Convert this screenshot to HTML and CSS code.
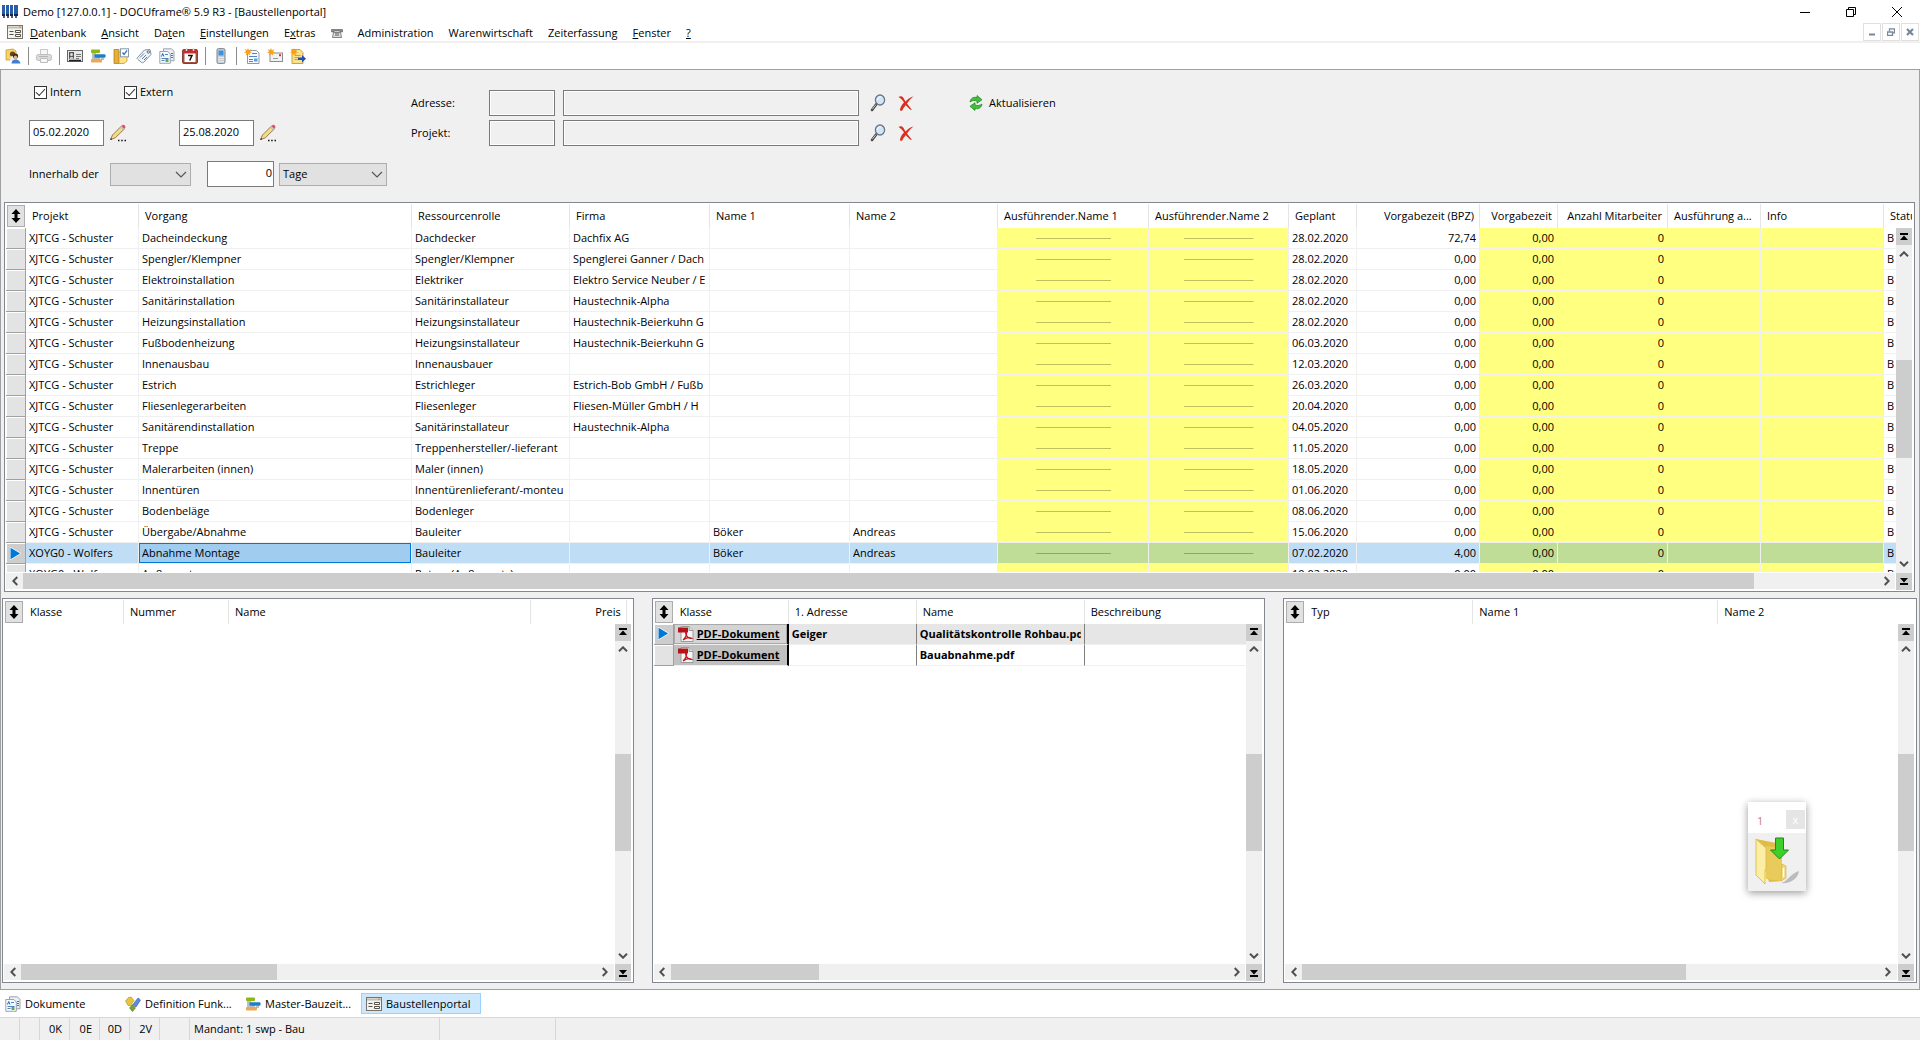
FILE: index.html
```html
<!DOCTYPE html>
<html lang="de">
<head>
<meta charset="utf-8">
<title>Demo [127.0.0.1] - DOCUframe® 5.9 R3 - [Baustellenportal]</title>
<link rel="stylesheet" href="styles.css">
</head>
<body>
<svg class="defs" aria-hidden="true">
  <symbol id="i-form" viewBox="0 0 16 14"><rect x=".5" y=".5" width="15" height="13" fill="#f4f2ec" stroke="#77736a"/><path d="M1 2.500h14" stroke="#c3bfb5" stroke-width="2"/><path d="M2.500 6.500h4M2.500 9.500h4" stroke="#55524a"/><path d="M8.500 5.500h5v2h-5zM8.500 9.500h5v2h-5z" fill="#fff" stroke="#55524a"/><path d="M12 2h2" stroke="#d08a3a"/></symbol>
  <symbol id="i-phone" viewBox="0 0 12 10"><path d="M.5 4V1.500h11V4H9V3H3v1z" fill="#8c8c8c" stroke="#555" stroke-width=".6"/><path d="M2.500 4.500h7l1 5h-9z" fill="#ddd" stroke="#666" stroke-width=".8"/><rect x="4" y="5" width="4" height="3" fill="#9a9a9a"/></symbol>
  <symbol id="i-user" viewBox="0 0 16 16"><path d="M1 2l7-1 3 2v9H1z" fill="#f5d265" stroke="#c99f2d" stroke-width=".8"/><circle cx="7.500" cy="6" r="2.600" fill="#6b4223"/><path d="M5 12c0-5 5-5 6-1v2H5z" fill="#eee"/><circle cx="10.500" cy="8" r="2.600" fill="#3b2a20"/><circle cx="10.500" cy="9.300" r="1.700" fill="#e8b58a"/><path d="M6.500 15.500c0-5.500 8-5.500 9 0z" fill="#3d7fd6"/></symbol>
  <symbol id="i-print" viewBox="0 0 16 16"><path d="M4.500 1.500h7v5h-7z" fill="#f7f7f7" stroke="#c6c6c6"/><rect x=".5" y="6.500" width="15" height="6" rx="2" fill="#dcdcdc" stroke="#bdbdbd"/><path d="M4.500 10.500h7v4h-7z" fill="#f7f7f7" stroke="#bdbdbd"/><path d="M3 8.500h9" stroke="#b4b4b4"/></symbol>
  <symbol id="i-card" viewBox="0 0 16 16"><rect x=".5" y="2.500" width="15" height="11" fill="#e8e8e8" stroke="#666"/><rect x="2" y="4" width="5" height="7" fill="#555"/><circle cx="4.500" cy="6.500" r="1.500" fill="#ddd"/><path d="M2.500 11c0-3 4-3 4 0z" fill="#ccc"/><path d="M9 6.500h5M9 8.500h5M9 10.500h3" stroke="#777"/><path d="M2 12.500h12" stroke="#222" stroke-width="1.500"/></symbol>
  <symbol id="i-gantt" viewBox="0 0 16 16"><path d="M2 6h4M2 8h3M2 10h8M11 11h3" stroke="#444" stroke-width=".7"/><rect x="1" y="1.500" width="9" height="3.500" rx="1" fill="#8cb80f"/><rect x="4.500" y="6.300" width="11" height="3.400" rx="1" fill="#1f7fc4"/><rect x="1" y="11" width="11" height="3.500" rx="1" fill="#e9a85a"/></symbol>
  <symbol id="i-box" viewBox="0 0 16 16"><path d="M1 1.500h5v14H1z" fill="#e3b03a" stroke="#b88620" stroke-width=".8"/><path d="M6 4h8v9l-3 2.500H6z" fill="#ffe28a" stroke="#c8992f" stroke-width=".8"/><rect x="7.500" y=".8" width="8" height="8" fill="#fff" stroke="#8a97a8"/><path d="M9.500 4.500l1.500 2 3-4" fill="none" stroke="#2b7bc4" stroke-width="1.300"/></symbol>
  <symbol id="i-tag" viewBox="0 0 16 16"><path d="M1.500 9.500l7-7.500 5.500-.5 1 5-7 7.500c-1 1-2 1-3 0l-3.500-3c-.6-.6-.6-1 0-1.500z" fill="#eef4fa" stroke="#7f93a8"/><circle cx="12.300" cy="4" r="1.200" fill="#fff" stroke="#667"/><path d="M4 9.500l4-4M6 11l4-4M8 12l3-3" stroke="#6b7f93"/></symbol>
  <symbol id="i-docs" viewBox="0 0 16 16"><path d="M4.500.8h8l2.500 2.500v9.500h-10.500z" fill="#e9eff6" stroke="#8e9aa8" stroke-width=".9"/><path d="M.8 3.500h8l2.500 2.500v9.300H.8z" fill="#f7fafd" stroke="#8e9aa8" stroke-width=".9"/><path d="M2.500 8.500l1.200-3 1.200 3" fill="none" stroke="#2a5fb0"/><path d="M6 6.500h3M2.500 10.500h7M2.500 12.500h3" stroke="#4d86c6"/><rect x="6.500" y="11" width="3" height="3" fill="#6aa84f"/><path d="M12 5.500h2M12 7.500h2M12 9.500h2" stroke="#3c78d8"/></symbol>
  <symbol id="i-cal" viewBox="0 0 16 16"><rect x=".6" y="1.600" width="14.800" height="13.800" rx="1" fill="#a8553f" stroke="#733"/><rect x="2.500" y="5.500" width="11" height="8.500" fill="#fff"/><rect x="1.500" y="1.500" width="13" height="3.500" fill="#c92b2b"/><path d="M4.500 0v3M11.500 0v3" stroke="#ddd" stroke-width="1.500"/><path d="M6 7.500h4l-2.300 5" fill="none" stroke="#111" stroke-width="1.500"/></symbol>
  <symbol id="i-mobile" viewBox="0 0 16 16"><rect x="4" y=".6" width="8" height="15" rx="1.500" fill="#c9ced4" stroke="#7d858e"/><rect x="5.500" y="2.500" width="5" height="5" fill="#3f8fe0"/><path d="M5.500 9.500h5M5.500 11.500h5M5.500 13.500h5" stroke="#fff" stroke-dasharray="1 1"/></symbol>
  <symbol id="i-star" viewBox="0 0 8 8"><path d="M4 0l.9 2.200L7.500 1 6 3.300 8 4.500l-2.400.6.6 2.400L4 6 1.800 7.500l.5-2.400L0 4.500l2-1.200L.8 1l2.300 1z" fill="#f7a11b"/></symbol>
  <symbol id="i-newdoc" viewBox="0 0 16 16"><path d="M3.500 2.500h9l2.500 2.500v10.500H3.500z" fill="#f7fafd" stroke="#8e9aa8"/><path d="M8 5.500h5M5 8.500h8M5 11.500h4M5 13.500h4" stroke="#4d86c6"/><rect x="10" y="10.500" width="3.500" height="3" fill="#5f9fd8"/><use href="#i-star" width="8" height="8"/></symbol>
  <symbol id="i-mail" viewBox="0 0 16 16"><rect x="3" y="5" width="12.500" height="8.500" fill="#f3f3f3" stroke="#8c8c8c"/><rect x="12" y="6.200" width="2" height="2" fill="#d33"/><path d="M6 10.500h5" stroke="#999"/><use href="#i-star" width="8" height="8"/></symbol>
  <symbol id="i-send" viewBox="0 0 16 16"><path d="M2 1.500h8l3 3v11H2z" fill="#fbe08a" stroke="#c9a43a"/><path d="M4.500 7.500h6M4.500 9.500h4M4.500 11.500h4" stroke="#c9a43a"/><path d="M8 9.500h4V7l4 3.800-4 3.700v-2.500H8z" fill="#1f4fb8"/><use href="#i-star" width="8" height="8"/></symbol>
  <symbol id="i-puzzle" viewBox="0 0 16 16"><path d="M3.500 1.500L6 1l3 3.500-3.500 5H3L.5 5z" fill="#e8c53a" stroke="#a8891c" stroke-width=".6"/><path d="M13 2l2.500 2-4.500 7-3-2.500z" fill="#5c8be8" stroke="#2c4fa0" stroke-width=".6"/><path d="M7.500 8.500l3 3.500-3 3.500-3-3.500z" fill="#7aa23c" stroke="#55752a" stroke-width=".6"/></symbol>
  <symbol id="i-pencil" viewBox="0 0 18 18"><path d="M1.500 15.500l2-4.500L12.500 2l3 2.800-9.200 9z" fill="#f5d98a" stroke="#7c6234" stroke-width=".8"/><path d="M12.200 2.300l1.500-1.400c1-.6 3.200 1 2.600 2.400l-1.300 1.500z" fill="#d9506a"/><path d="M11 3.500l1.400-1.400 2.800 2.700-1.300 1.400z" fill="#b9c4c9"/><path d="M1.200 16l.8-2 1.300 1.200z" fill="#222"/><path d="M9 16.500h1.500M12.200 16.500h1.500M15.500 16.500H17" stroke="#111" stroke-width="1.500"/></symbol>
  <symbol id="i-search" viewBox="0 0 18 18"><path d="M3 16L7.500 10" stroke="#444" stroke-width="2.600" stroke-linecap="round"/><path d="M3.200 15.300L7 10.500" stroke="#ccc"/><ellipse cx="11" cy="6" rx="4.600" ry="5" fill="#cfe5fa" stroke="#6d7680" stroke-width="1.300"/><path d="M8.500 6c0-2 1.500-3.500 3.500-3" fill="none" stroke="#fff"/></symbol>
  <symbol id="i-x" viewBox="0 0 18 18"><path d="M1.500 3c2-1.500 4-1 5 1l2 3.500C10.500 5.500 13 3 16.500 2.500 14 4.500 11.500 7 10 9.500l5 6.500-2-.6-4.300-4.200C7 13 6 15 5.300 16.500c-1 .6-2.600.2-2.300-1C3.500 13 5 10.500 7 8.600 5.500 6 3.500 4 1.500 3z" fill="#dc2f1e"/></symbol>
  <symbol id="i-refresh" viewBox="0 0 14 16"><path d="M1 7c.5-4 4-5.500 7-4.300V.5l5 4.200-5 3.600V6C5.500 5 3 5.500 1 7z" fill="#3fc23a" stroke="#1e7d1c" stroke-width=".7"/><path d="M13 9c-.5 4-4 5.500-7 4.300v2.200l-5-4.200L6 7.700V10c2.500 1 5 .5 7-1z" fill="#3fc23a" stroke="#1e7d1c" stroke-width=".7"/></symbol>
  <symbol id="i-pdf" viewBox="0 0 16 16"><path d="M3 .5h8l4 4v11H3z" fill="#f6f6f6" stroke="#9a9a9a"/><path d="M11 .5v4h4" fill="#ddd" stroke="#9a9a9a"/><path d="M0 1.500h10v5H0z" fill="#b5121b"/><path d="M5 14c2-1.500 4-5 3.500-7.500-.5-1.200-1.500 0-.5 2 1 2.300 3 4 5.500 3.800-2-1.300-5-.6-8.500 1.700z" fill="none" stroke="#c4161c" stroke-width="1.200"/></symbol>
  <symbol id="i-updown" viewBox="0 0 10 14"><path d="M5 0l4.500 5H6.500v4h3L5 14 .5 9h3V5h-3z" fill="#000"/></symbol>
  <symbol id="i-up" viewBox="0 0 10 6"><path d="M1 5.300l4-4 4 4" fill="none" stroke="#505050" stroke-width="2"/></symbol>
  <symbol id="i-down" viewBox="0 0 10 6"><path d="M1 .7l4 4 4-4" fill="none" stroke="#505050" stroke-width="2"/></symbol>
  <symbol id="i-left" viewBox="0 0 6 10"><path d="M5.300 1l-4 4 4 4" fill="none" stroke="#505050" stroke-width="2"/></symbol>
  <symbol id="i-right" viewBox="0 0 6 10"><path d="M.7 1l4 4-4 4" fill="none" stroke="#505050" stroke-width="2"/></symbol>
  <symbol id="i-first" viewBox="0 0 8 8"><path d="M0 0h8v2H0zM4 2.500L8 7H0z" fill="#000"/></symbol>
  <symbol id="i-last" viewBox="0 0 8 8"><path d="M0 6h8v2H0zM4 5.500L8 1H0z" fill="#000"/></symbol>
  <symbol id="i-cur" viewBox="0 0 10 12"><path d="M0 0L10 6 0 12z" fill="#0078d7" stroke="#fff" stroke-width=".8"/></symbol>
  <symbol id="i-chev" viewBox="0 0 12 7"><path d="M1 1l5 5 5-5" fill="none" stroke="#555" stroke-width="1.200"/></symbol>
  <symbol id="i-folder" viewBox="0 0 50 50"><path d="M28 46c6-1 9-9 18-12-1 8-9 13-18 12z" fill="#000" opacity=".22"/><path d="M3 2l25 5 1 37-13 1z" fill="#e0bb45"/><path d="M12 9l17 2v33l-16-2z" fill="#e9cb5c"/><path d="M29 27l4 2v12l-5 3z" fill="#f1d878" stroke="#d0ac3c" stroke-width=".6"/><path d="M30.500 31v9" stroke="#fff" stroke-width="1.500"/><path d="M3 2l10 9v21l-1 1v14L3 38z" fill="#fdeea6" stroke="#dbb949" stroke-width=".9"/><path d="M22.500 1h8v12h5L26.500 22l-9-9h5z" fill="#3fcf2c" stroke="#1f8a17"/></symbol>
</svg>

<header class="titlebar">
  <svg class="logo" viewBox="0 0 16 13" aria-hidden="true"><path d="M0 0h3v9H0zM4 0h3v9H4zM8 0h3v9H8zM12 0h4v9h-4z" fill="#2a5da8"/><path d="M0 9h3v2H0zM4 9h3v2H4zM8 9h3v2H8zM12 9h4v2h-4z" fill="#12294d"/><path d="M1 12h2M5 12h2M9 12h2M13 12h2" stroke="#12294d" stroke-width="1.500"/></svg>
  <h1>Demo [127.0.0.1] - DOCUframe® 5.9 R3 - [Baustellenportal]</h1>
  <div class="winbtns">
    <button aria-label="Minimieren"><svg viewBox="0 0 10 10"><path d="M0 5.500h10" stroke="#000"/></svg></button>
    <button aria-label="Wiederherstellen"><svg viewBox="0 0 10 10"><path d="M.5 2.500h7v7h-7zM2.500 2.500v-2h7v7h-2" fill="none" stroke="#000"/></svg></button>
    <button aria-label="Schließen"><svg viewBox="0 0 10 10"><path d="M0 0l10 10M10 0L0 10" stroke="#000"/></svg></button>
  </div>
</header>

<nav class="menubar">
  <svg class="menuicon"><use href="#i-form"/></svg>
  <a href="#"><u>D</u>atenbank</a><a href="#"><u>A</u>nsicht</a><a href="#">Da<u>t</u>en</a><a href="#"><u>E</u>instellungen</a><a href="#">E<u>x</u>tras</a>
  <a href="#" class="phone" aria-label="Telefon"><svg><use href="#i-phone"/></svg></a>
  <a href="#">Administration</a><a href="#">Warenwirtschaft</a><a href="#">Zeiterfassung</a><a href="#"><u>F</u>enster</a><a href="#"><u>?</u></a>
  <div class="mdibtns">
    <button aria-label="Fenster minimieren"><svg viewBox="0 0 8 8"><path d="M1 6.500h6" stroke="#76879a" stroke-width="2"/></svg></button>
    <button aria-label="Fenster wiederherstellen"><svg viewBox="0 0 8 8"><path d="M.5 4h5v3.500h-5zM2.500 3V.800h5v4H6" fill="none" stroke="#76879a" stroke-width="1.300"/></svg></button>
    <button aria-label="Fenster schließen"><svg viewBox="0 0 8 8"><path d="M1 1l6 6M7 1L1 7" stroke="#76879a" stroke-width="2.200"/></svg></button>
  </div>
</nav>

<div class="toolbar">
  <button aria-label="Benutzer"><svg><use href="#i-user"/></svg></button><span class="sep"></span>
  <button aria-label="Drucken"><svg><use href="#i-print"/></svg></button><span class="sep"></span>
  <button aria-label="Adressen"><svg><use href="#i-card"/></svg></button>
  <button aria-label="Bauzeitenplan"><svg><use href="#i-gantt"/></svg></button>
  <button aria-label="Vorgänge"><svg><use href="#i-box"/></svg></button>
  <button aria-label="Artikel"><svg><use href="#i-tag"/></svg></button>
  <button aria-label="Dokumente"><svg><use href="#i-docs"/></svg></button>
  <button aria-label="Kalender"><svg><use href="#i-cal"/></svg></button><span class="sep"></span>
  <button aria-label="Telefon"><svg><use href="#i-mobile"/></svg></button><span class="sep"></span>
  <button aria-label="Neues Dokument"><svg><use href="#i-newdoc"/></svg></button>
  <button aria-label="Neue E-Mail"><svg><use href="#i-mail"/></svg></button>
  <button aria-label="Weiterleiten"><svg><use href="#i-send"/></svg></button>
</div>

<main class="workspace">
  <form class="filter">
    <div class="period">
      <div class="checks">
        <label><input type="checkbox" checked>Intern</label>
        <label><input type="checkbox" checked>Extern</label>
      </div>
      <div class="dates">
        <span><input class="field date" type="text" value="05.02.2020" aria-label="Von"><button type="button" class="tool" aria-label="Von wählen"><svg><use href="#i-pencil"/></svg></button></span>
        <span><input class="field date" type="text" value="25.08.2020" aria-label="Bis"><button type="button" class="tool" aria-label="Bis wählen"><svg><use href="#i-pencil"/></svg></button></span>
      </div>
      <div class="within">
        <label for="w1">Innerhalb der</label>
        <span class="combo short"><select id="w1"><option></option></select><svg><use href="#i-chev"/></svg></span>
        <input class="field num" type="text" value="0" aria-label="Anzahl">
        <span class="combo"><select aria-label="Einheit"><option>Tage</option></select><svg><use href="#i-chev"/></svg></span>
      </div>
    </div>
    <div class="lookup">
      <label for="a1">Adresse:</label><input id="a1" class="field ro" type="text"><input class="field ro" type="text" aria-label="Adresse Name">
      <button type="button" class="tool" aria-label="Adresse suchen"><svg><use href="#i-search"/></svg></button><button type="button" class="tool" aria-label="Adresse löschen"><svg><use href="#i-x"/></svg></button>
      <label for="p1">Projekt:</label><input id="p1" class="field ro" type="text"><input class="field ro" type="text" aria-label="Projekt Name">
      <button type="button" class="tool" aria-label="Projekt suchen"><svg><use href="#i-search"/></svg></button><button type="button" class="tool" aria-label="Projekt löschen"><svg><use href="#i-x"/></svg></button>
    </div>
    <button type="button" class="refresh"><svg><use href="#i-refresh"/></svg>Aktualisieren</button>
  </form>

  <section class="panel tasks">
    <div class="view">
    <table>
      <colgroup><col class="c-sel"><col class="c113"><col class="c273"><col class="c158"><col class="c140"><col class="c140"><col class="c148"><col class="c151"><col class="c140"><col class="c68"><col class="c123"><col class="c78"><col class="c110"><col class="c93"><col class="c123"><col></colgroup>
      <thead><tr><th class="s"><button aria-label="Sortierung"><svg><use href="#i-updown"/></svg></button></th><th>Projekt</th><th>Vorgang</th><th>Ressourcenrolle</th><th>Firma</th><th>Name 1</th><th>Name 2</th><th>Ausführender.Name 1</th><th>Ausführender.Name 2</th><th>Geplant</th><th class="r">Vorgabezeit (BPZ)</th><th class="r">Vorgabezeit</th><th class="r">Anzahl Mitarbeiter</th><th>Ausführung a...</th><th>Info</th><th>Statu</th></tr></thead>
      <tbody>
      <tr><td class="s"></td><td>XJTCG - Schuster</td><td>Dacheindeckung</td><td>Dachdecker</td><td>Dachfix AG</td><td></td><td></td><td class="y m"></td><td class="y m"></td><td>28.02.2020</td><td class="r">72,74</td><td class="y r">0,00</td><td class="y r">0</td><td class="y"></td><td class="y"></td><td>B</td></tr>
      <tr><td class="s"></td><td>XJTCG - Schuster</td><td>Spengler/Klempner</td><td>Spengler/Klempner</td><td>Spenglerei Ganner / Dach</td><td></td><td></td><td class="y m"></td><td class="y m"></td><td>28.02.2020</td><td class="r">0,00</td><td class="y r">0,00</td><td class="y r">0</td><td class="y"></td><td class="y"></td><td>B</td></tr>
      <tr><td class="s"></td><td>XJTCG - Schuster</td><td>Elektroinstallation</td><td>Elektriker</td><td>Elektro Service Neuber / E</td><td></td><td></td><td class="y m"></td><td class="y m"></td><td>28.02.2020</td><td class="r">0,00</td><td class="y r">0,00</td><td class="y r">0</td><td class="y"></td><td class="y"></td><td>B</td></tr>
      <tr><td class="s"></td><td>XJTCG - Schuster</td><td>Sanitärinstallation</td><td>Sanitärinstallateur</td><td>Haustechnik-Alpha</td><td></td><td></td><td class="y m"></td><td class="y m"></td><td>28.02.2020</td><td class="r">0,00</td><td class="y r">0,00</td><td class="y r">0</td><td class="y"></td><td class="y"></td><td>B</td></tr>
      <tr><td class="s"></td><td>XJTCG - Schuster</td><td>Heizungsinstallation</td><td>Heizungsinstallateur</td><td>Haustechnik-Beierkuhn G</td><td></td><td></td><td class="y m"></td><td class="y m"></td><td>28.02.2020</td><td class="r">0,00</td><td class="y r">0,00</td><td class="y r">0</td><td class="y"></td><td class="y"></td><td>B</td></tr>
      <tr><td class="s"></td><td>XJTCG - Schuster</td><td>Fußbodenheizung</td><td>Heizungsinstallateur</td><td>Haustechnik-Beierkuhn G</td><td></td><td></td><td class="y m"></td><td class="y m"></td><td>06.03.2020</td><td class="r">0,00</td><td class="y r">0,00</td><td class="y r">0</td><td class="y"></td><td class="y"></td><td>B</td></tr>
      <tr><td class="s"></td><td>XJTCG - Schuster</td><td>Innenausbau</td><td>Innenausbauer</td><td></td><td></td><td></td><td class="y m"></td><td class="y m"></td><td>12.03.2020</td><td class="r">0,00</td><td class="y r">0,00</td><td class="y r">0</td><td class="y"></td><td class="y"></td><td>B</td></tr>
      <tr><td class="s"></td><td>XJTCG - Schuster</td><td>Estrich</td><td>Estrichleger</td><td>Estrich-Bob GmbH / Fußb</td><td></td><td></td><td class="y m"></td><td class="y m"></td><td>26.03.2020</td><td class="r">0,00</td><td class="y r">0,00</td><td class="y r">0</td><td class="y"></td><td class="y"></td><td>B</td></tr>
      <tr><td class="s"></td><td>XJTCG - Schuster</td><td>Fliesenlegerarbeiten</td><td>Fliesenleger</td><td>Fliesen-Müller GmbH / H</td><td></td><td></td><td class="y m"></td><td class="y m"></td><td>20.04.2020</td><td class="r">0,00</td><td class="y r">0,00</td><td class="y r">0</td><td class="y"></td><td class="y"></td><td>B</td></tr>
      <tr><td class="s"></td><td>XJTCG - Schuster</td><td>Sanitärendinstallation</td><td>Sanitärinstallateur</td><td>Haustechnik-Alpha</td><td></td><td></td><td class="y m"></td><td class="y m"></td><td>04.05.2020</td><td class="r">0,00</td><td class="y r">0,00</td><td class="y r">0</td><td class="y"></td><td class="y"></td><td>B</td></tr>
      <tr><td class="s"></td><td>XJTCG - Schuster</td><td>Treppe</td><td>Treppenhersteller/-lieferant</td><td></td><td></td><td></td><td class="y m"></td><td class="y m"></td><td>11.05.2020</td><td class="r">0,00</td><td class="y r">0,00</td><td class="y r">0</td><td class="y"></td><td class="y"></td><td>B</td></tr>
      <tr><td class="s"></td><td>XJTCG - Schuster</td><td>Malerarbeiten (innen)</td><td>Maler (innen)</td><td></td><td></td><td></td><td class="y m"></td><td class="y m"></td><td>18.05.2020</td><td class="r">0,00</td><td class="y r">0,00</td><td class="y r">0</td><td class="y"></td><td class="y"></td><td>B</td></tr>
      <tr><td class="s"></td><td>XJTCG - Schuster</td><td>Innentüren</td><td>Innentürenlieferant/-monteu</td><td></td><td></td><td></td><td class="y m"></td><td class="y m"></td><td>01.06.2020</td><td class="r">0,00</td><td class="y r">0,00</td><td class="y r">0</td><td class="y"></td><td class="y"></td><td>B</td></tr>
      <tr><td class="s"></td><td>XJTCG - Schuster</td><td>Bodenbeläge</td><td>Bodenleger</td><td></td><td></td><td></td><td class="y m"></td><td class="y m"></td><td>08.06.2020</td><td class="r">0,00</td><td class="y r">0,00</td><td class="y r">0</td><td class="y"></td><td class="y"></td><td>B</td></tr>
      <tr><td class="s"></td><td>XJTCG - Schuster</td><td>Übergabe/Abnahme</td><td>Bauleiter</td><td></td><td>Böker</td><td>Andreas</td><td class="y m"></td><td class="y m"></td><td>15.06.2020</td><td class="r">0,00</td><td class="y r">0,00</td><td class="y r">0</td><td class="y"></td><td class="y"></td><td>B</td></tr>
      <tr class="sel"><td class="s"><svg><use href="#i-cur"/></svg></td><td>XOYG0 - Wolfers</td><td class="focus">Abnahme Montage</td><td>Bauleiter</td><td></td><td>Böker</td><td>Andreas</td><td class="y m"></td><td class="y m"></td><td>07.02.2020</td><td class="r">4,00</td><td class="y r">0,00</td><td class="y r">0</td><td class="y"></td><td class="y"></td><td>B</td></tr>
      <tr><td class="s"></td><td>XOYG0 - Wolfers</td><td>Außenputz</td><td>Putzer (Außenputz)</td><td></td><td></td><td></td><td class="y m"></td><td class="y m"></td><td>10.02.2020</td><td class="r">0,00</td><td class="y r">0,00</td><td class="y r">0</td><td class="y"></td><td class="y"></td><td>B</td></tr>
      </tbody>
    </table>
    </div>
    <div class="vscroll"><button class="end" aria-label="Anfang"><svg><use href="#i-first"/></svg></button><button aria-label="Hoch"><svg class="v"><use href="#i-up"/></svg></button><div class="track"><span></span></div><button aria-label="Runter"><svg class="v"><use href="#i-down"/></svg></button><button class="end" aria-label="Ende"><svg><use href="#i-last"/></svg></button></div>
    <div class="hscroll"><button aria-label="Links"><svg><use href="#i-left"/></svg></button><div class="track"><span style="width:93.300%"></span></div><button aria-label="Rechts"><svg><use href="#i-right"/></svg></button></div>
  </section>

  <div class="lower">
    <section class="panel">
      <div class="view">
      <table>
        <colgroup><col class="c-sel"><col class="c100"><col class="c105"><col><col class="c96"><col class="c4"></colgroup>
        <thead><tr><th class="s"><button aria-label="Sortierung"><svg><use href="#i-updown"/></svg></button></th><th>Klasse</th><th>Nummer</th><th>Name</th><th class="r">Preis</th><th></th></tr></thead>
      </table>
      </div>
      <div class="vscroll"><button class="end" aria-label="Anfang"><svg><use href="#i-first"/></svg></button><button aria-label="Hoch"><svg class="v"><use href="#i-up"/></svg></button><div class="track"><span></span></div><button aria-label="Runter"><svg class="v"><use href="#i-down"/></svg></button><button class="end" aria-label="Ende"><svg><use href="#i-last"/></svg></button></div>
      <div class="hscroll"><button aria-label="Links"><svg><use href="#i-left"/></svg></button><div class="track"><span style="width:44.400%"></span></div><button aria-label="Rechts"><svg><use href="#i-right"/></svg></button></div>
    </section>

    <section class="panel docs">
      <div class="view">
      <table>
        <colgroup><col class="c-sel"><col class="c115"><col class="c128"><col class="c168"><col></colgroup>
        <thead><tr><th class="s"><button aria-label="Sortierung"><svg><use href="#i-updown"/></svg></button></th><th>Klasse</th><th>1. Adresse</th><th>Name</th><th>Beschreibung</th></tr></thead>
        <tbody>
        <tr class="cur"><td class="s"><svg><use href="#i-cur"/></svg></td><td class="k"><a href="#"><svg><use href="#i-pdf"/></svg><u>PDF-Dokument</u></a></td><td>Geiger</td><td>Qualitätskontrolle Rohbau.pd</td><td></td></tr>
        <tr><td class="s"></td><td class="k"><a href="#"><svg><use href="#i-pdf"/></svg><u>PDF-Dokument</u></a></td><td></td><td>Bauabnahme.pdf</td><td></td></tr>
        </tbody>
      </table>
      </div>
      <div class="vscroll"><button class="end" aria-label="Anfang"><svg><use href="#i-first"/></svg></button><button aria-label="Hoch"><svg class="v"><use href="#i-up"/></svg></button><div class="track"><span></span></div><button aria-label="Runter"><svg class="v"><use href="#i-down"/></svg></button><button class="end" aria-label="Ende"><svg><use href="#i-last"/></svg></button></div>
      <div class="hscroll"><button aria-label="Links"><svg><use href="#i-left"/></svg></button><div class="track"><span style="width:26.600%"></span></div><button aria-label="Rechts"><svg><use href="#i-right"/></svg></button></div>
    </section>

    <section class="panel">
      <div class="view">
      <table>
        <colgroup><col class="c-sel"><col class="c168"><col class="c245"><col></colgroup>
        <thead><tr><th class="s"><button aria-label="Sortierung"><svg><use href="#i-updown"/></svg></button></th><th>Typ</th><th>Name 1</th><th>Name 2</th></tr></thead>
      </table>
      </div>
      <div class="vscroll"><button class="end" aria-label="Anfang"><svg><use href="#i-first"/></svg></button><button aria-label="Hoch"><svg class="v"><use href="#i-up"/></svg></button><div class="track"><span></span></div><button aria-label="Runter"><svg class="v"><use href="#i-down"/></svg></button><button class="end" aria-label="Ende"><svg><use href="#i-last"/></svg></button></div>
      <div class="hscroll"><button aria-label="Links"><svg><use href="#i-left"/></svg></button><div class="track"><span style="width:66.500%"></span></div><button aria-label="Rechts"><svg><use href="#i-right"/></svg></button></div>
      <aside class="dropbox">
        <div class="drophead"><span>1</span><button aria-label="Schließen">x</button></div>
        <div class="dropbody"><svg><use href="#i-folder"/></svg></div>
      </aside>
    </section>
  </div>
</main>

<nav class="taskbar">
  <button><svg><use href="#i-docs"/></svg>Dokumente</button>
  <button><svg><use href="#i-puzzle"/></svg>Definition Funk...</button>
  <button><svg><use href="#i-gantt"/></svg>Master-Bauzeit...</button>
  <button class="active"><svg class="form"><use href="#i-form"/></svg>Baustellenportal</button>
</nav>

<footer class="status">
  <span class="w20"></span><span class="w20"></span><span class="w30">0K</span><span class="w30">0E</span><span class="w30">0D</span><span class="w30">2V</span><span class="w30"></span><span class="client">Mandant: 1 swp - Bau</span><span class="w116"></span>
</footer>
</body>
</html>
```
FILE: styles.css
```css
* { box-sizing: border-box; }

body {
  margin: 0;
  height: 100vh;
  display: flex;
  flex-direction: column;
  overflow: hidden;
  background: #fff;
  color: #000;
  font: 11px/16px "Open Sans", "Noto Sans", sans-serif;
}

button, input, select { font: inherit; color: inherit; }
button { border: 0; padding: 0; background: none; display: flex; align-items: center; justify-content: center; }
a { color: inherit; text-decoration: none; }
svg { display: block; flex: none; }
.defs { position: absolute; width: 0; height: 0; }

/* title, menu, toolbar */
.titlebar { height: 23px; flex: none; display: flex; align-items: center; padding-left: 2px; gap: 5px; }
.titlebar h1 { margin: 0; font-size: 11px; font-weight: 400; flex: 1; }
.logo { width: 16px; height: 13px; }
.winbtns { display: flex; }
.winbtns button { width: 46px; height: 20px; }
.winbtns svg { width: 10px; height: 10px; }

.menubar { height: 20px; flex: none; display: flex; align-items: center; gap: 15px; padding-left: 7px; border-bottom: 2px solid #f0f0f0; }
.menubar a { padding-top: 2px; }
.menuicon { width: 16px; height: 14px; margin-right: -8px; }
.phone svg { width: 12px; height: 10px; }
.mdibtns { margin-left: auto; display: flex; gap: 1px; align-self: stretch; padding-right: 1px; }
.mdibtns button { width: 18px; border: 1px solid #e0e0e0; }
.mdibtns svg { width: 8px; height: 8px; }

.toolbar { height: 26px; flex: none; display: flex; align-items: center; gap: 7px; padding-left: 5px; }
.toolbar svg { width: 16px; height: 16px; }
.sep { width: 1px; height: 18px; background: #8c8c8c; }

/* workspace */
.workspace { flex: 1; min-height: 0; display: flex; flex-direction: column; background: #f0f0f0; border: 1px solid #a0a0a0; padding: 1px 2px 6px 1px; }

.filter { flex: none; display: grid; grid-template-columns: 382px 558px 1fr; padding: 11px 0 15px 27px; align-items: start; }
.period { display: grid; row-gap: 15px; }
.checks { display: flex; height: 20px; align-items: center; padding-left: 5px; }
.checks label { width: 90px; display: flex; align-items: center; gap: 3px; }
.checks input { appearance: none; margin: 0; width: 13px; height: 13px; border: 1px solid #333; background: #fff; display: grid; place-items: center; }
.checks input::after { content: ""; width: 8px; height: 4px; border: solid #333; border-width: 0 0 1px 1px; transform: rotate(-48deg) translate(1px, -1px); }
.dates { display: flex; height: 26px; margin-top: 3px; }
.dates span { width: 150px; display: flex; align-items: center; gap: 5px; }
.field { border: 1px solid #7a7a7a; border-radius: 0; background: #fff; height: 26px; padding: 0 3px 3px; margin: 0; min-width: 0; outline: 0; }
.date { width: 75px; }
.num { width: 67px; text-align: right; padding-right: 1px; margin: 0 5px 0 16px; }
.ro { background: #f0f0f0; box-shadow: inset 0 0 0 1px #fff; }
.tool svg { width: 18px; height: 18px; }
.within { display: flex; align-items: center; height: 26px; }
.within label { width: 81px; white-space: nowrap; }
.combo { width: 108px; display: grid; align-items: center; }
.combo.short { width: 81px; }
.combo select { grid-area: 1 / 1; appearance: none; width: 100%; height: 23px; border: 1px solid #adadad; border-radius: 0; background: #e1e1e1; padding: 0 3px; margin: 0; }
.combo svg { grid-area: 1 / 1; width: 12px; height: 7px; justify-self: end; margin-right: 4px; pointer-events: none; }

.lookup { display: grid; grid-template-columns: 70px 66px 296px 22px 18px; column-gap: 8px; row-gap: 4px; align-items: center; padding-top: 8px; margin-right: auto; }
.refresh { gap: 6px; margin-top: 12px; justify-self: start; height: 18px; }
.refresh svg { width: 14px; height: 16px; }

/* list panels */
.panel { position: relative; min-height: 0; min-width: 0; background: #fff; border: 1px solid #828790; padding: 1px 2px 1px 1px; display: grid; grid-template: 24px minmax(0, 1fr) 17px / minmax(0, 1fr) 16px; }
.view { grid-area: 1 / 1 / 3 / 3; overflow: hidden; min-height: 0; margin-bottom: 1px; }
.tasks { flex: 391; margin: 0 2px 0 2px; }
.lower { flex: 391; min-height: 0; display: grid; grid-template-columns: 631fr 613fr 633fr; gap: 18px; padding-top: 6px; }

table { width: 100%; table-layout: fixed; border-spacing: 0; }
th { height: 24px; padding: 0 5px 0 6px; font-weight: 400; text-align: left; white-space: nowrap; overflow: hidden; border-right: 1px solid #e5e5e5; }
th:last-child { border-right: 0; padding-right: 0; }
td { height: 21px; padding: 0 3px; line-height: 20px; white-space: nowrap; overflow: clip; overflow-clip-margin: content-box; border: solid #f0f0f0; border-width: 0 1px 1px 0; }
.r { text-align: right; }
th.s { padding: 1px; border: 0; }
th.s button { width: 18px; height: 22px; background: #e1e1e1; border: 1px solid #adadad; }
th.s svg { width: 10px; height: 14px; }
td.s { background: #e3e3e3; border-color: #a0a0a0; padding: 0 0 0 4px; box-shadow: inset 1px 1px #fff; }
td.s svg { width: 11px; height: 13px; }
.y { background: #ffff80; }
.m { background-image: linear-gradient(#bfbf60, #bfbf60); background-size: 50% 1px; background-position: 50% 50%; background-repeat: no-repeat; }
.sel td { background-color: #bfddf5; }
.sel .y { background-color: #bfdd97; }
.sel .m { background-image: linear-gradient(#8fa671, #8fa671); }
.sel .s, .cur .s { background-color: #cdcdcd; }
.sel .focus { background: #a0ccef; box-shadow: inset 0 0 0 1px #0078d7; }

.docs td { font-weight: 700; border-right-color: #808080; }
.docs td:last-child { border-right: 0; }
.docs .cur td { background: #e6e6e6; }
.docs td.k { padding: 0 2px 0 4px; background: #c0c0c0; border-right: 2px solid #000; }
.docs .cur td.k { background: #d4d4d4; box-shadow: inset 0 0 0 1px #a8a8a8; }
.docs td.s { background: #e3e3e3; border-right-color: #a0a0a0; }
.docs .cur td.s { background: #cdcdcd; }
.k a { display: flex; align-items: center; gap: 3px; }
.k svg { width: 16px; height: 16px; }

.c-sel { width: 20px; }
.c4 { width: 4px; }
.c68 { width: 68px; }
.c78 { width: 78px; }
.c93 { width: 93px; }
.c96 { width: 96px; }
.c100 { width: 100px; }
.c105 { width: 105px; }
.c110 { width: 110px; }
.c113 { width: 113px; }
.c115 { width: 115px; }
.c123 { width: 123px; }
.c128 { width: 128px; }
.c140 { width: 140px; }
.c148 { width: 148px; }
.c151 { width: 151px; }
.c158 { width: 158px; }
.c168 { width: 168px; }
.c245 { width: 245px; }
.c273 { width: 273px; }

.vscroll { grid-area: 2 / 2 / 4 / 3; display: flex; flex-direction: column; background: #f0f0f0; z-index: 1; }
.vscroll button { height: 17px; flex: none; }
.vscroll .end { background: #cdcdcd; }
.vscroll svg { width: 8px; height: 8px; }
.vscroll .v { width: 10px; height: 6px; }
.vscroll .track { flex: 1; display: grid; grid-template-rows: 1fr 1fr 1fr; }
.vscroll .track span { grid-row: 2; background: #cdcdcd; }
.hscroll { grid-area: 3 / 1; display: flex; background: #f0f0f0; margin-bottom: 1px; margin-right: 1px; }
.hscroll button { width: 17px; flex: none; }
.hscroll svg { width: 6px; height: 10px; }
.hscroll .track { flex: 1; display: flex; }
.hscroll .track span { background: #cdcdcd; }

/* floating drop target */
.dropbox { position: absolute; right: 110px; bottom: 91px; z-index: 2; width: 58px; background: #f0f0f0; box-shadow: 0 2px 8px rgba(0, 0, 0, .4); }
.drophead { height: 31px; background: #fff; display: flex; justify-content: space-between; align-items: flex-end; padding: 0 1px 4px 9px; color: #c08080; }
.drophead button { width: 19px; height: 19px; background: #e5e5e5; color: #fff; }
.dropbody { height: 58px; padding: 4px 0 0 5px; }
.dropbody svg { width: 50px; height: 50px; }

/* window tabs and status line */
.taskbar { height: 27px; flex: none; display: flex; align-items: center; padding: 0 1px; }
.taskbar button { width: 120px; height: 21px; gap: 4px; padding-left: 4px; justify-content: flex-start; white-space: nowrap; }
.taskbar svg { width: 16px; height: 16px; }
.taskbar .form { height: 14px; }
.taskbar .active { background: #cce8ff; border: 1px solid #99d1ff; }
.status { height: 23px; flex: none; display: flex; background: #f0f0f0; border-top: 1px solid #d7d7d7; line-height: 21px; }
.status span { border-right: 1px solid #d7d7d7; text-align: right; padding-right: 7px; }
.w20 { width: 20px; }
.w30 { width: 30px; }
.w116 { width: 116px; }
.status .client { width: 250px; text-align: left; padding-left: 4px; }
```
